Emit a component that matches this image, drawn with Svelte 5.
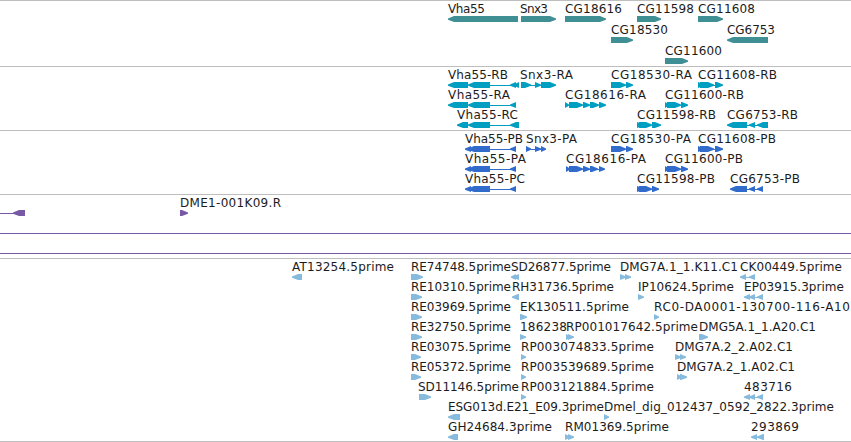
<script>
  // Feature: [label, label start, label end, row, shapes]
  // Shape strings: "<a,b" left arrow, ">a,b" right arrow, "-a,b" connecting line.
  const tracks = [
    {
      name: 'genes', height: 66, pitch: 21, color: '#3f8f95',
      features: [
        ['Vha55', 448, 485, 0, '<448,518'],
        ['Snx3', 520, 548, 0, '>521,556'],
        ['CG18616', 565, 622, 0, '>565,606'],
        ['CG11598', 637, 694, 0, '>637,661'],
        ['CG11608', 698, 755, 0, '>698,723'],
        ['CG18530', 611, 668, 1, '>611,633'],
        ['CG6753', 727, 775, 1, '<727,768'],
        ['CG11600', 665, 722, 2, '>665,688']
      ]
    },
    {
      name: 'transcripts', height: 64, pitch: 20, color: '#009fc1',
      features: [
        ['Vha55-RB', 448, 508, 0, '<448,468 <468,490 -490,518 <510,516 <514,519'],
        ['Snx3-RA', 520, 573, 0, '>521,531 -529,536 >535,541 >541,556'],
        ['CG18530-RA', 611, 692, 0, '>611,626 >626,633'],
        ['CG11608-RB', 698, 777, 0, '>698,704 >700,714 -712,716 >715,723'],
        ['Vha55-RA', 448, 510, 1, '<448,468 <468,490 -490,512 <510,516'],
        ['CG18616-RA', 565, 646, 1, '>565,569 >569,583 >583,590 >590,599 >599,606'],
        ['CG11600-RB', 665, 744, 1, '>665,669 >667,681 >681,688'],
        ['Vha55-RC', 457, 518, 2, '<457,468 <468,490 -490,512 <510,519'],
        ['CG11598-RB', 637, 716, 2, '>637,643 >639,652 >652,661'],
        ['CG6753-RB', 727, 798, 2, '<727,747 -747,764 <749,755 <757,768']
      ]
    },
    {
      name: 'proteins', height: 64, pitch: 20, color: '#316ccc',
      features: [
        ['Vha55-PB', 465, 523, 0, '<465,471 <468,490 -490,512 <510,516'],
        ['Snx3-PA', 526, 577, 0, '>526,531 -529,544 >535,541 >541,546'],
        ['CG18530-PA', 611, 691, 0, '>611,626 >626,633'],
        ['CG11608-PB', 698, 776, 0, '>698,704 >700,714 -712,716 >715,723'],
        ['Vha55-PA', 465, 526, 1, '<465,471 <468,490 -490,512 <510,516'],
        ['CG18616-PA', 566, 646, 1, '>566,570 >569,583 -581,600 >583,590 >590,598 >599,605'],
        ['CG11600-PB', 665, 743, 1, '>665,669 >667,681 >681,688'],
        ['Vha55-PC', 465, 525, 2, '<465,471 <468,490 -490,512 <510,516'],
        ['CG11598-PB', 637, 715, 2, '>637,643 >639,652 >652,659'],
        ['CG6753-PB', 730, 800, 2, '<730,747 -747,760 <749,755 <757,763']
      ]
    },
    {
      name: 'clones', height: 64, pitch: 20, color: '#7859a6',
      features: [
        ['', 0, 0, 0, '-0,15 <13,25'],
        ['DME1-001K09.R', 180, 281, 0, '>180,188'],
        ['', 0, 0, 1, '-0,851'],
        ['', 0, 0, 2, '-0,851']
      ]
    },
    {
      name: 'ests', height: 183, pitch: 20, color: '#86bbdd',
      features: [
        ['AT13254.5prime', 292, 394, 0, '<292,302'],
        ['RE74748.5prime', 411, 511, 0, '>411,423'],
        ['SD26877.5prime', 511, 611, 0, '<511,516 <513,519'],
        ['DMG7A.1_1.K11.C1', 620, 738, 0, '>620,626 >625,631'],
        ['CK00449.5prime', 740, 842, 0, '<740,746 -745,751 <749,755'],
        ['RE10310.5prime', 411, 511, 1, '>411,422'],
        ['RH31736.5prime', 512, 614, 1, '<512,519'],
        ['IP10624.5prime', 638, 734, 1, '>638,644'],
        ['EP03915.3prime', 744, 844, 1, '<744,750 <749,755 -754,759 <757,763'],
        ['RE03969.5prime', 411, 511, 2, '>411,422'],
        ['EK130511.5prime', 520, 629, 2, '>520,527'],
        ['RC0-DA0001-130700-116-A10', 654, 850, 2, '>654,659'],
        ['RE32750.5prime', 411, 511, 3, '>411,422'],
        ['186238', 520, 567, 3, '>520,526'],
        ['RP001017642.5prime', 566, 698, 3, '>566,571 >568,574'],
        ['DMG5A.1_1.A20.C1', 699, 816, 3, '>699,708'],
        ['RE03075.5prime', 411, 511, 4, '>411,421'],
        ['RP003074833.5prime', 521, 654, 4, '>521,526'],
        ['DMG7A.2_2.A02.C1', 675, 793, 4, '>675,681 >680,686'],
        ['RE05372.5prime', 411, 511, 5, '>411,421'],
        ['RP003539689.5prime', 521, 654, 5, '>521,526'],
        ['DMG7A.2_1.A02.C1', 677, 795, 5, '>677,682 >680,687'],
        ['SD11146.5prime', 418, 519, 6, '>419,431'],
        ['RP003121884.5prime', 521, 654, 6, '>521,526'],
        ['483716', 744, 792, 6, '<744,750 <749,755 -754,759 <757,763'],
        ['ESG013d.E21_E09.3prime', 448, 604, 7, '<448,460'],
        ['Dmel_dig_012437_0592_2822.3prime', 604, 834, 7, '>604,609'],
        ['GH24684.3prime', 448, 552, 8, '<448,458'],
        ['RM01369.5prime', 565, 669, 8, '>565,570 >568,574'],
        ['293869', 751, 799, 8, '<751,757 -755,760 <757,764']
      ]
    }
  ];

  function outline(shape, top) {
    const [a, b] = shape.slice(1).split(',').map(Number);
    if (shape[0] === '-') return `M${a} ${top + 3}H${b}V${top + 4}H${a}Z`;
    const t = Math.min(b - a, 6);
    return shape[0] === '<'
      ? `M${a} ${top + 2.5}L${a + t} ${top}H${b}V${top + 6}H${a + t}L${a} ${top + 3.8}Z`
      : `M${b} ${top + 2.5}L${b - t} ${top}H${a}V${top + 6}H${b - t}L${b} ${top + 3.8}Z`;
  }
</script>

<main>
  {#each tracks as track (track.name)}
    <section>
      <svg width="851" height={track.height - 1} viewBox="0 1 851 {track.height - 1}">
        {#each track.features as [label, start, end, row, shapes]}
          {#each shapes.split(' ') as shape}
            <path fill={track.color} d={outline(shape, 16 + row * track.pitch)} />
          {/each}
          {#if label}
            <text x={start} y={13 + row * track.pitch} textLength={end - start}>{label}</text>
          {/if}
        {/each}
      </svg>
    </section>
  {/each}
</main>

<style>
  :global(body) {
    background: #fff;
  }
  main {
    display: flex;
    flex-direction: column;
    width: 851px;
    height: 442px;
    box-sizing: border-box;
    border-bottom: 1px solid #bebebe;
    overflow: hidden;
  }
  section {
    flex: none;
    border-top: 1px solid #bebebe;
  }
  svg {
    display: block;
  }
  text {
    font: 12px 'DejaVu Sans', sans-serif;
    fill: #1c1c1c;
  }
</style>
